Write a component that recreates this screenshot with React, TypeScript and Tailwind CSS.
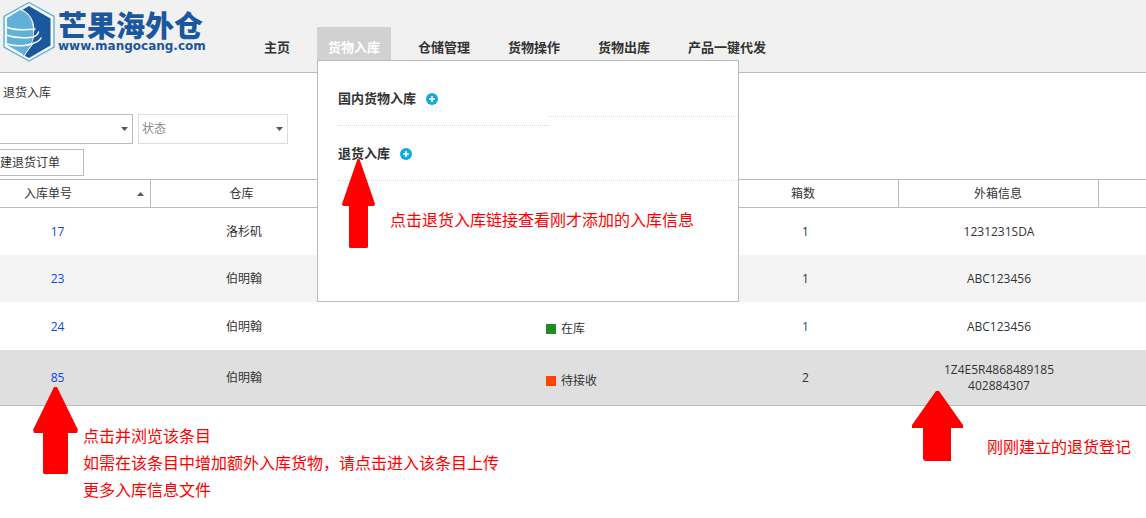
import React, { useState } from 'react';

interface NavItem {
  label: string;
  active?: boolean;
}

interface InboundRow {
  id: string;
  warehouse: string;
  status: string;
  statusClass: string;
  boxes: string;
  info: string[];
  rowClass: string;
}

const navItems: NavItem[] = [
  { label: '主页' },
  { label: '货物入库', active: true },
  { label: '仓储管理' },
  { label: '货物操作' },
  { label: '货物出库' },
  { label: '产品一键代发' },
];

const rows: InboundRow[] = [
  { id: '17', warehouse: '洛杉矶', status: '', statusClass: '', boxes: '1', info: ['1231231SDA'], rowClass: 'h-[47px] bg-white' },
  { id: '23', warehouse: '伯明翰', status: '', statusClass: '', boxes: '1', info: ['ABC123456'], rowClass: 'h-[47px] bg-[#f4f4f4]' },
  { id: '24', warehouse: '伯明翰', status: '在库', statusClass: 'bg-[#228b22]', boxes: '1', info: ['ABC123456'], rowClass: 'h-12 bg-white' },
  { id: '85', warehouse: '伯明翰', status: '待接收', statusClass: 'bg-[#ff4500]', boxes: '2', info: ['1Z4E5R4868489185', '402884307'], rowClass: 'h-14 bg-[#dfdfdf] border-b border-[#bbb]' },
];

const Logo = () => (
  <a href="#" className="flex w-[253px] shrink-0 items-start pl-[2px] text-[#1b579f]">
    <svg className="mt-px h-[62px] w-[54px] shrink-0" viewBox="0 0 54 62" fill="none">
      <path d="M27 1.500 52 15.500V46L27 60 2 46V15.500Z" fill="#f8fcfe" stroke="#5eb0d6" strokeWidth="1.400" />
      <path d="M27 5 48.500 17.500V44.500L27 57 21 54C24 48 30 44 31.500 38L32 30C32 22 29 14 20 9Z" fill="#1b579f" />
      <path d="M18 9C27 12 31 20 31 29V35L30 41 21.500 53.500 5 44V17Z" fill="#61b0d8" />
      <path d="M19 8.500C28 12 32 20 32 30" stroke="#f8fcfe" strokeWidth="1" />
      <path d="M4 26C14 30 25 29 33 28M4 34C15 38 25 37 31 36C34 35 36 33 36.500 31M5 43C15 46 26 45 32 42C36 41 38 39 39 37" stroke="#f8fcfe" strokeWidth="1.500" strokeLinecap="round" />
      <path d="M31 42C29 46 25 49 22 55" stroke="#f8fcfe" strokeWidth="1.200" />
    </svg>
    <span className="mt-2 flex flex-col pl-[2px]">
      <span className="whitespace-nowrap font-['Noto_Sans_CJK_SC',sans-serif] text-[29px] leading-8 font-black">芒果海外仓</span>
      <span className="-mt-[2px] whitespace-nowrap font-['DejaVu_Sans',sans-serif] text-xs leading-4 font-bold">www.mangocang.com</span>
    </span>
  </a>
);

const PlusIcon = () => (
  <svg className="h-3 w-3" viewBox="0 0 12 12">
    <circle cx="6" cy="6" r="6" fill="#11a9df" />
    <path d="M6 3v6M3 6h6" stroke="#fff" strokeWidth="1.6" />
  </svg>
);

const Caret = ({ up = false }: { up?: boolean }) => (
  <svg className="h-1 w-[7px]" viewBox="0 0 7 4" fill="#555">
    <path d={up ? 'M0 4 3.500 0 7 4Z' : 'M0 0H7L3.500 4Z'} />
  </svg>
);

const InboundMenu = () => (
  <div className="absolute top-full left-0 z-10 h-[242px] w-[422px] border border-[#bbb] bg-white text-[#333]">
    <div className="flex items-start pl-5">
      <div className="w-[211px] border-b border-dotted border-[#d8d8d8] pt-7 pb-4">
        <a href="#" className="flex h-5 items-center gap-[10px]">国内货物入库 <PlusIcon /></a>
      </div>
      <div className="h-14 flex-1 border-b border-dotted border-[#d8d8d8]" />
    </div>
    <div className="ml-5 border-b border-dotted border-[#d8d8d8] pt-[18px] pb-4">
      <a href="#" className="flex h-5 items-center gap-[10px]">退货入库 <PlusIcon /></a>
    </div>
    <p className="mt-[27px] pl-[72px] text-base leading-6 font-normal text-[#f00]">点击退货入库链接查看刚才添加的入库信息</p>
    <svg className="absolute top-[98px] left-6 h-[89px] w-[34px]" viewBox="0 0 34 89" fill="#f00">
      <path d="M15.500 0h2L33 45l-1 2h-6v41l-1 1H8l-1-1V47H1l-1-2Z" />
    </svg>
  </div>
);

export default function App() {
  const [status, setStatus] = useState('');
  const [order, setOrder] = useState('');

  return (
    <div className="overflow-x-hidden bg-white font-['Open_Sans','Noto_Sans_CJK_SC',sans-serif] text-xs text-[#333]">
      <header className="flex h-[73px] border-b border-[#bbb] bg-[#f1f1f1]">
        <Logo />
        <nav className="flex gap-4 pt-[27px] text-[13px] font-bold">
          {navItems.map((item) => (
            <div key={item.label} className="relative h-[33px]">
              <a
                href="#"
                className={`flex h-full items-center px-[11px] pt-2 whitespace-nowrap ${item.active ? 'bg-[#d1d1d1] text-white' : ''}`}
              >
                {item.label}
              </a>
              {item.active && <InboundMenu />}
            </div>
          ))}
        </nav>
      </header>

      <main>
        <h1 className="pt-[10px] pl-[3px] leading-5">退货入库</h1>

        {/* Filters */}
        <div className="mt-[11px] flex gap-[5px]">
          <div className="relative">
            <select
              aria-label="入库单号"
              value={order}
              onChange={(e) => setOrder(e.target.value)}
              className="h-[30px] w-[133px] appearance-none border border-l-0 border-[#bbb] bg-white px-1"
            >
              <option value=""></option>
              {rows.map((row) => (
                <option key={row.id} value={row.id}>{row.id}</option>
              ))}
            </select>
            <span className="pointer-events-none absolute inset-y-0 right-[5px] flex items-center"><Caret /></span>
          </div>
          <div className="relative">
            <select
              aria-label="状态"
              value={status}
              onChange={(e) => setStatus(e.target.value)}
              className="h-[30px] w-[150px] appearance-none border border-[#ddd] bg-white px-[3px] text-[#888]"
            >
              <option value="">状态</option>
              <option value="in">在库</option>
              <option value="pending">待接收</option>
            </select>
            <span className="pointer-events-none absolute inset-y-0 right-[5px] flex items-center"><Caret /></span>
          </div>
        </div>

        <button className="mt-[5px] block h-[27px] border border-l-0 border-[#bbb] bg-white pr-[23px]">建退货订单</button>

        <table className="mt-[3px] w-full table-fixed border-collapse text-center leading-4">
          <colgroup>
            <col className="w-[150px]" />
            <col className="w-[183px]" />
            <col className="w-[202px]" />
            <col className="w-[173px]" />
            <col className="w-[190px]" />
            <col className="w-[200px]" />
            <col />
          </colgroup>
          <thead>
            <tr className="h-7 border-y border-[#bbb] [&>th]:border-r [&>th]:border-[#bbb] [&>th]:p-0 [&>th]:font-normal [&>th:last-child]:border-r-0">
              <th>
                <button className="flex w-full items-center justify-between pr-[6px] pl-6">
                  入库单号 <Caret up />
                </button>
              </th>
              <th>仓库</th>
              <th></th>
              <th>状态</th>
              <th>箱数</th>
              <th>外箱信息</th>
              <th></th>
            </tr>
          </thead>
          <tbody>
            {rows.map((row) => (
              <tr key={row.id} className={row.rowClass}>
                <td className="pt-[2px] pr-[35px]"><a href="#" className="text-[#0a46f0]">{row.id}</a></td>
                <td className="pt-[2px] pl-[5px]">{row.warehouse}</td>
                <td></td>
                <td className="pt-[7px] pl-[11px]">
                  {row.status && (
                    <span className="flex items-center gap-[5px]">
                      <span className={`h-[10px] w-[10px] ${row.statusClass}`} />
                      {row.status}
                    </span>
                  )}
                </td>
                <td className={`pt-[2px] pl-[5px] ${row.id === '24' ? 'text-[#1d3f9f]' : ''}`}>{row.boxes}</td>
                <td className="pt-[2px] pl-[2px]">
                  {row.info.map((line) => (
                    <div key={line}>{line}</div>
                  ))}
                </td>
                <td></td>
              </tr>
            ))}
          </tbody>
        </table>

        {/* Notes that point at the new entry */}
        <section className="relative flex pt-[17px] pb-[14px] text-base leading-[27px] text-[#f00]">
          <svg className="absolute -top-[19px] left-[33px] h-[87px] w-[45px]" viewBox="0 0 45 87" fill="#f00">
            <path d="M21 0h3L45 43l-1 3h-9v40l-1 1H11l-1-1V46H1l-1-3Z" />
          </svg>
          <p className="w-[904px] shrink-0 pl-[83px]">
            点击并浏览该条目<br />
            如需在该条目中增加额外入库货物，请点击进入该条目上传<br />
            更多入库信息文件
          </p>
          <svg className="absolute -top-[15px] left-[912px] h-[70px] w-[51px]" viewBox="0 0 51 70" fill="#f00">
            <path d="M24 0h3L51 34v3H39v33H13l-2-2V37H0v-3Z" />
          </svg>
          <p className="mt-[11px] pl-[83px] whitespace-nowrap">刚刚建立的退货登记</p>
        </section>
      </main>
    </div>
  );
}
